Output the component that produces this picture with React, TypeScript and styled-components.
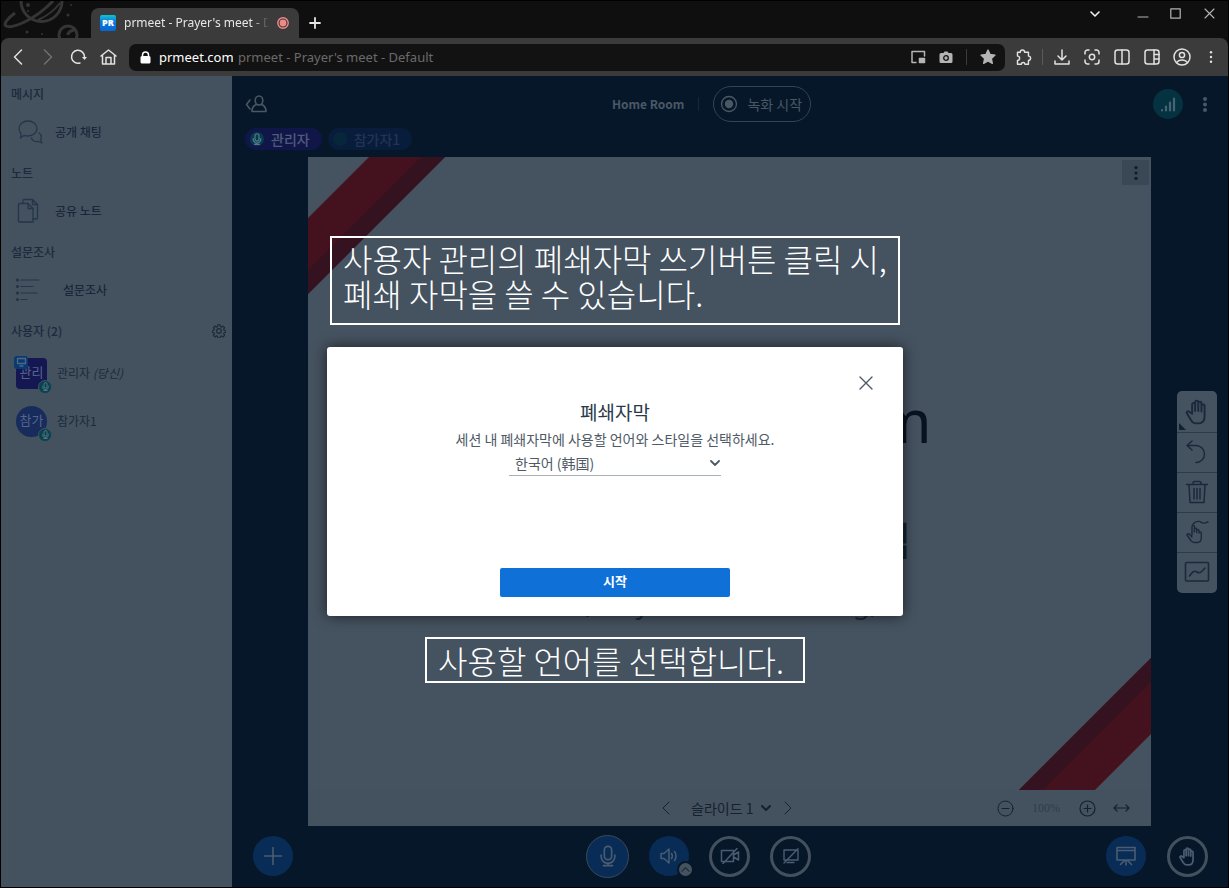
import React from "react";
import styled, { createGlobalStyle, css } from "styled-components";

const c = {
  navy: "#061729",
  panel: "#44515e",
  slide: "#45525f",
  ink: "#1b2a3c",
  faint: "#4a5866",
  blue: "#082c56",
  chrome: "#3b3b3b",
};

const GlobalStyle = createGlobalStyle`
  * { box-sizing: border-box; }
  body { margin: 0; background: #000; font-family: "Noto Sans CJK KR", "Noto Sans", sans-serif; }
  button, input, select { font: inherit; color: inherit; }
  h1, h2, p { margin: 0; font-weight: 400; }
  svg { display: block; flex: none; }
`;

/* ---------- browser frame ---------- */

const Window = styled.div`
  display: flex;
  flex-direction: column;
  min-height: 100vh;
  border: 1px solid #000;
  background: #0f0f0f;
`;

const TitleBar = styled.header`
  display: flex;
  align-items: flex-end;
  height: 37px;
  color: #e6e6e6;
`;

const Tab = styled.div`
  display: flex;
  align-items: center;
  gap: 8px;
  width: 208px;
  height: 30px;
  padding: 0 10px 0 9px;
  border-radius: 8px 8px 0 0;
  background: ${c.chrome};
`;

const TabTitle = styled.span`
  flex: 1;
  overflow: hidden;
  white-space: nowrap;
  font: 12px/16px "Noto Sans", sans-serif;
  mask-image: linear-gradient(90deg, #000 88%, transparent);
`;

const Favicon = styled.span`
  width: 16px;
  height: 16px;
  border-radius: 2px;
  background: linear-gradient(#12c4cf, #0b7de0 40%, #0766cf);
  color: #fff;
  font: 800 9px/16px "Open Sans", sans-serif;
  text-align: center;
`;

const Plain = styled.button<{ $w?: number; $h?: number }>`
  display: flex;
  align-items: center;
  justify-content: center;
  flex: none;
  width: ${(p) => p.$w ?? 30}px;
  height: ${(p) => p.$h ?? 30}px;
  padding: 0;
  border: 0;
  background: none;
  color: inherit;
`;

const WindowButtons = styled.div`
  display: flex;
  align-self: flex-start;
  margin-left: auto;
  padding: 0 3px 0 0;
  color: #b4b4b4;
`;

const Toolbar = styled.nav`
  display: flex;
  align-items: center;
  height: 38px;
  padding: 0 3px 0 2px;
  border-radius: 8px 8px 0 0;
  background: ${c.chrome};
  color: #e2e2e2;
`;

const AddressBar = styled.div`
  display: flex;
  align-items: center;
  flex: 1;
  height: 27px;
  margin: 0 3px 0 6px;
  padding: 0 2px 0 11px;
  border-radius: 7px;
  background: #121212;
  font: 13px/18px "Noto Sans", sans-serif;
  color: #b4b4b4;
`;

const Url = styled.input`
  width: 82px;
  padding: 0 0 0 8px;
  margin-right: 5px;
  border: 0;
  background: none;
  color: #fff;
`;

const PageName = styled.span`
  flex: 1;
  white-space: nowrap;
  color: #6a6a6a;
`;

const Divider = styled.i<{ $tone: string; $h: number; $gap: number }>`
  width: 1px;
  height: ${(p) => p.$h}px;
  margin: 0 ${(p) => p.$gap}px;
  background: ${(p) => p.$tone};
`;

/* ---------- meeting ---------- */

const Meeting = styled.div`
  position: relative;
  display: flex;
  flex: 1;
  background: ${c.navy};
`;

const Sidebar = styled.aside`
  width: 231px;
  padding-top: 10px;
  background: ${c.panel};
  color: ${c.ink};
  font-size: 12px;
  line-height: 16px;
`;

const Section = styled.section`
  margin-bottom: 13px;
`;

const SectionTitle = styled.h2`
  display: flex;
  align-items: center;
  justify-content: space-between;
  height: 16px;
  padding: 0 6px 0 10px;
  font-size: 12px;
  font-weight: 500;
  line-height: 16px;
`;

const SideItem = styled.button<{ $indent?: boolean }>`
  display: flex;
  align-items: center;
  gap: ${(p) => (p.$indent ? 22 : 12)}px;
  width: 100%;
  height: 40px;
  margin-top: 10px;
  padding: 0 14px;
  border: 0;
  background: none;
  color: #101d33;
  text-align: left;
  svg { color: #25364a; }
`;

const UserList = styled.ul`
  margin: 10px 0 0;
  padding: 0 15px;
  list-style: none;
`;

const User = styled.li`
  display: flex;
  align-items: center;
  gap: 10px;
  height: 48px;
`;

const Avatar = styled.span<{ $round?: boolean }>`
  position: relative;
  width: 31px;
  height: 31px;
  border-radius: ${(p) => (p.$round ? "50%" : "4px")};
  background: ${(p) => (p.$round ? "#172b5c" : "#151753")};
  color: #54648a;
  font-size: 13px;
  line-height: 28px;
  text-align: center;
`;

const badge = css`
  position: absolute;
  display: grid;
  place-items: center;
`;

const MicBadge = styled.span`
  ${badge}
  right: -5px;
  bottom: -5px;
  width: 14px;
  height: 14px;
  border: 1px solid ${c.panel};
  border-radius: 50%;
  background: #074250;
  color: #5b7580;
`;

const PresenterBadge = styled.span`
  ${badge}
  left: -2px;
  top: -2px;
  width: 14px;
  height: 13px;
  border-radius: 3px;
  background: #0b3a70;
  color: #4e6787;
`;

const Content = styled.main`
  display: flex;
  flex: 1;
  flex-direction: column;
  min-width: 0;
  color: ${c.faint};
`;

const NavBar = styled.div`
  display: flex;
  align-items: center;
  height: 52px;
  padding: 4px 8px 0 9px;
`;

const Side = styled.div<{ $end?: boolean }>`
  display: flex;
  align-items: center;
  flex: 1;
  justify-content: ${(p) => (p.$end ? "flex-end" : "flex-start")};
`;

const RoomInfo = styled.div`
  display: flex;
  align-items: center;
  padding-right: 38px;
`;

const RoomName = styled.h1`
  font-size: 12px;
  font-weight: 700;
  line-height: 18px;
`;

const RecordButton = styled.button`
  display: flex;
  align-items: center;
  gap: 9px;
  height: 36px;
  padding: 0 8px 0 6px;
  border: 1px solid #344454;
  border-radius: 18px;
  background: none;
  font-size: 14px;
  line-height: 20px;
`;

const Signal = styled.button`
  display: grid;
  place-items: center;
  width: 30px;
  height: 30px;
  margin-right: 7px;
  padding: 0;
  border: 0;
  border-radius: 50%;
  background: #053241;
  color: #466472;
`;

const Speakers = styled.div`
  display: flex;
  gap: 6px;
  height: 29px;
  padding-left: 13px;
`;

const Speaker = styled.button<{ $quiet?: boolean }>`
  display: flex;
  align-items: center;
  gap: 7px;
  height: 22px;
  padding: 0 12px 0 5px;
  border: 0;
  border-radius: 11px;
  background: ${(p) => (p.$quiet ? "#081c3c" : "#101748")};
  color: ${(p) => (p.$quiet ? "#223452" : "#505b7c")};
  font-size: 14px;
  font-weight: 500;
  line-height: 18px;
`;

const SpeakerDot = styled.span<{ $quiet?: boolean }>`
  display: grid;
  place-items: center;
  width: 14px;
  height: 14px;
  border-radius: 50%;
  background: ${(p) => (p.$quiet ? "#06273a" : "#063a4c")};
  color: #527888;
`;

const Stage = styled.div`
  display: flex;
  flex: 1;
  align-items: center;
`;

const Presentation = styled.section`
  display: flex;
  flex: 1;
  flex-direction: column;
  align-self: stretch;
  margin: 0 26px 0 76px;
  background: ${c.panel};
`;

const Slide = styled.div`
  position: relative;
  display: flex;
  flex: 1;
  flex-direction: column;
  align-items: center;
  padding-top: 223px;
  background: ${c.slide};
  color: #07131f;
`;

const Ribbon = styled.svg<{ $end?: boolean }>`
  position: absolute;
  ${(p) => (p.$end ? "right: 0; bottom: 0; transform: rotate(180deg);" : "left: 0; top: 0;")}
`;

const SlideMenu = styled.button`
  position: absolute;
  top: 3px;
  right: 2px;
  display: grid;
  place-items: center;
  width: 27px;
  height: 25px;
  padding: 0;
  border: 0;
  background: #3a4755;
  color: #101c2b;
`;

const SlideHeading = styled.p`
  width: 404px;
  font: 60px/80px "Noto Sans", sans-serif;
  text-align: right;
`;

const SlideSubheading = styled.p`
  width: 404px;
  padding: 50px 20px 0 0;
  font-size: 40px;
  line-height: 58px;
  text-align: right;
  color: #14212f;
`;

const SlideCaption = styled.p`
  display: flex;
  width: 296px;
  margin-top: 14px;
  font: 28px/40px "Noto Sans", sans-serif;
  color: #1d2a38;
  span { width: 54px; }
  span:last-child { width: auto; margin-left: auto; }
`;

const SlideControls = styled.div`
  display: flex;
  align-items: center;
  height: 36px;
  padding-right: 5px;
  color: #14212f;
`;

const SlidePicker = styled.label`
  display: flex;
  align-items: center;
  gap: 2px;
  margin: 0 2px 0 10px;
`;

const bareSelect = css`
  appearance: none;
  padding: 0;
  border: 0;
  background: none;
  outline: 0;
`;

const SlideSelect = styled.select`
  ${bareSelect}
  width: 68px;
  font-size: 14px;
  line-height: 18px;
`;

const ZoomLevel = styled.span`
  width: 64px;
  color: #303e4b;
  font: 12px/16px "Liberation Serif", serif;
  text-align: center;
`;

const Tools = styled.div`
  display: flex;
  flex-direction: column;
  width: 40px;
  margin-right: 11px;
  padding: 1px 0;
  border-radius: 5px;
  background: ${c.slide};
  color: #1a293c;
  overflow: hidden;
`;

const Tool = styled.button`
  position: relative;
  display: grid;
  place-items: center;
  height: 40px;
  padding: 0;
  border: 0;
  background: none;
  color: inherit;
  & + & { border-top: 1px solid #2d3b49; }
`;

const Corner = styled.i`
  position: absolute;
  left: 2px;
  bottom: 2px;
  border-top: 7px solid transparent;
  border-left: 7px solid #14212f;
`;

const ActionBar = styled.footer`
  display: flex;
  align-items: center;
  height: 61px;
  padding: 0 20px 1px 21px;
`;

const MediaButtons = styled.div`
  display: flex;
  align-items: center;
  gap: 20px;
  padding-right: 64px;
`;

const Round = styled.button<{ $kind: "solid" | "ring" | "talking" }>`
  position: relative;
  display: grid;
  place-items: center;
  width: ${(p) => (p.$kind === "talking" ? 43 : p.$kind === "ring" ? 41 : 40)}px;
  aspect-ratio: 1;
  padding: 0;
  border: ${(p) =>
    p.$kind === "solid" ? "0" : p.$kind === "ring" ? "3px solid #43505d" : "1px solid #3b4a5a"};
  border-radius: 50%;
  background: ${(p) => (p.$kind === "ring" ? "none" : c.blue)};
  color: #4b5c70;
`;

const MoreBadge = styled.span`
  ${badge}
  right: -5px;
  bottom: -2px;
  width: 17px;
  height: 17px;
  border: 2px solid ${c.navy};
  border-radius: 50%;
  background: #46535f;
  color: #17273a;
`;

/* ---------- dialog and captions over the meeting ---------- */

const Overlay = styled.div`
  position: absolute;
  inset: 0;
  display: flex;
  flex-direction: column;
  align-items: center;
  padding: 160px 0 0 1px;
`;

const Note = styled.p<{ $wide?: boolean }>`
  width: ${(p) => (p.$wide ? 570 : 380)}px;
  height: ${(p) => (p.$wide ? 89 : 46)}px;
  padding: ${(p) => (p.$wide ? 3 : 4)}px 0 0 11px;
  border: 2px solid #fff;
  color: #fff;
  font-size: 32px;
  font-weight: 300;
  line-height: 35px;
  white-space: nowrap;
`;

const Dialog = styled.div`
  display: flex;
  flex-direction: column;
  align-items: center;
  width: 576px;
  height: 269px;
  margin: 22px 0 21px;
  padding: 21px 20px 19px;
  border-radius: 3px;
  background: #fff;
  box-shadow: 0 0 14px rgba(0, 0, 0, 0.6);
  color: #4e5a66;
  font-size: 14px;
  line-height: 20px;
`;

const CloseButton = styled(Plain)`
  align-self: flex-end;
  margin-right: 2px;
`;

const DialogTitle = styled.h2`
  margin-top: 1px;
  color: #2b3a4a;
  font-size: 19px;
  line-height: 26px;
`;

const DialogText = styled.p`
  margin-top: 4px;
`;

const LanguageField = styled.label`
  display: flex;
  align-items: center;
  width: 212px;
  height: 24px;
  margin-top: 3px;
  padding: 0 1px 1px 6px;
  border-bottom: 1px solid #a9b2ba;
`;

const LanguageSelect = styled.select`
  ${bareSelect}
  flex: 1;
`;

const StartButton = styled.button`
  width: 230px;
  height: 29px;
  margin-top: auto;
  padding: 0 0 4px;
  border: 0;
  border-radius: 2px;
  background: #0f70d7;
  color: #fff;
  font-size: 13px;
  font-weight: 700;
  line-height: 20px;
`;

/* ---------- icons ---------- */

type IconProps = {
  w?: number;
  h?: number;
  box?: string;
  sw?: number;
  fill?: string;
  children: React.ReactNode;
};

const Icon = ({ w = 18, h = w, box = "0 0 24 24", sw = 1.5, fill = "none", children }: IconProps) => (
  <svg
    width={w}
    height={h}
    viewBox={box}
    fill={fill}
    stroke="currentColor"
    strokeWidth={sw}
    strokeLinecap="round"
    strokeLinejoin="round"
    aria-hidden="true"
  >
    {children}
  </svg>
);

const Chevron = ({ d, w = 10, h = w, sw = 1.5 }: { d: "u" | "d"; w?: number; h?: number; sw?: number }) => {
  const paths = { u: "M1 7l4-4 4 4", d: "M1 3l4 4 4-4" };
  return (
    <Icon w={w} h={h} box="0 0 10 10" sw={sw}>
      <path d={paths[d]} />
    </Icon>
  );
};

const Dots = ({ h = 16, r = 2 }: { h?: number; r?: number }) => (
  <svg width="6" height={h} viewBox={`0 0 6 ${h}`} fill="currentColor" aria-hidden="true">
    <circle cx="3" cy={r} r={r} />
    <circle cx="3" cy={h / 2} r={r} />
    <circle cx="3" cy={h - r} r={r} />
  </svg>
);

const Mic = ({ s = 20, sw = 2 }: { s?: number; sw?: number }) => (
  <Icon w={s} sw={sw}>
    <rect x="8" y="1.5" width="8" height="14.5" rx="4" />
    <path d="M4.500 11v1.500a7.500 7.500 0 0 0 15 0V11M12 20v2.500M7 22.500h10" />
  </Icon>
);

const Hand = ({ s = 26, sw = 1.8 }: { s?: number; sw?: number }) => (
  <Icon w={s} sw={sw}>
    <path d="M7.500 13.500V5a1.400 1.400 0 0 1 2.800 0v6V3a1.400 1.400 0 0 1 2.900 0v8V4a1.400 1.400 0 0 1 2.900 0v7.500V6.500a1.400 1.400 0 0 1 2.900 0v9.500c0 4-2 6.500-5.500 6.500H11c-2 0-3.500-1-4.500-3L2.500 13c-.5-1.200 1.200-2.200 2.200-1.200z" />
  </Icon>
);

const Planet = () => (
  <svg width="90" height="37" viewBox="0 0 90 37" fill="none" stroke="#353535" strokeWidth="3" aria-hidden="true">
    <path d="M20 0a20 20 0 0 0 41 0" />
    <path d="M14 12C7 17 2 23 5 25c6 3 29-6 47-25" />
    <path d="M59 2c-6 8-13 13-22 17" strokeWidth="2" />
    <circle cx="67" cy="34" r="9" />
    <path d="M67 34c0-4 3-4 6-5" />
    <g fill="#353535" stroke="none">
      <circle cx="27" cy="4" r="2" />
      <circle cx="27" cy="10" r="1" />
      <circle cx="26" cy="31" r="1.500" />
      <circle cx="41" cy="33" r="1" />
      <circle cx="67" cy="14" r="1.500" />
      <circle cx="70" cy="4" r="1" />
    </g>
  </svg>
);

const RibbonBands = ({ size, end }: { size: number; end?: boolean }) => (
  <Ribbon $end={end} width={size} height={size} viewBox={`0 0 ${size} ${size}`} aria-hidden="true">
    <path d={`M${size - 76} 0H${size}L0 ${size}V${size - 76}z`} fill="#44121e" />
    <path d={`M${size - 24} 0H${size}L0 ${size}V${size - 24}z`} fill="#341220" />
  </Ribbon>
);

export default function App() {
  return (
    <Window>
      <GlobalStyle />
      <TitleBar>
        <Planet />
        <Tab>
          <Favicon>PR</Favicon>
          <TabTitle>prmeet - Prayer's meet - Default</TabTitle>
          <svg width="12" height="12" viewBox="0 0 12 12" aria-hidden="true">
            <circle cx="6" cy="6" r="5.200" fill="none" stroke="#f08a87" strokeWidth="1.400" />
            <circle cx="6" cy="6" r="3.400" fill="#f08a87" />
          </svg>
        </Tab>
        <Plain $w={32} aria-label="New tab">
          <Icon w={12} box="0 0 12 12" sw={1.8}><path d="M6 1v10M1 6h10" /></Icon>
        </Plain>
        <WindowButtons>
          <Plain $w={68} $h={25} aria-label="Tab search">
            <Icon w={10} box="0 0 10 10" sw={1.600}><path d="M1 3l4 4 4-4" stroke="#f0f0f0" /></Icon>
          </Plain>
          <Plain $w={28} $h={30} aria-label="Minimize">
            <Icon w={12} box="0 0 12 12" sw={1.2}><path d="M1 7h10" /></Icon>
          </Plain>
          <Plain $w={36} $h={24} aria-label="Maximize">
            <Icon w={11} box="0 0 11 11" sw={1.200}><path d="M.8.800h9.400v9.400H.800z" /></Icon>
          </Plain>
          <Plain $w={32} $h={24} aria-label="Close window">
            <Icon w={11} box="0 0 11 11" sw={1.100}><path d="M1 1l9 9M10 1l-9 9" /></Icon>
          </Plain>
        </WindowButtons>
      </TitleBar>

      <Toolbar>
        <Plain aria-label="Back">
          <Icon w={10} h={16} box="0 0 10 16"><path d="M8.500 1 1.500 8l7 7" /></Icon>
        </Plain>
        <Plain aria-label="Forward">
          <Icon w={10} h={16} box="0 0 10 16"><path d="M1.500 1l7 7-7 7" stroke="#707070" /></Icon>
        </Plain>
        <Plain aria-label="Reload">
          <Icon w={17} h={16} box="0 0 17 16">
            <path d="M10 14a6.500 6.500 0 1 1 4.500-6" />
            <path d="M12 8h5l-2.500 3z" fill="currentColor" stroke="none" />
          </Icon>
        </Plain>
        <Plain aria-label="Home">
          <Icon w={17} h={16} box="0 0 17 16">
            <path d="M1 7l7.500-6L16 7M2.500 6v9h12V6M6 15V8.500h5V15" />
          </Icon>
        </Plain>
        <AddressBar>
          <svg width="11" height="13" viewBox="0 0 11 13" fill="#fff" aria-hidden="true">
            <rect x="0.500" y="5" width="10" height="7.500" rx="1.500" />
            <path d="M2.500 6V4a3 3 0 0 1 6 0v2" fill="none" stroke="#fff" strokeWidth="1.500" />
          </svg>
          <Url aria-label="Address" defaultValue="prmeet.com" />
          <PageName>prmeet - Prayer's meet - Default</PageName>
          <Plain $w={28} $h={26} aria-label="Picture in picture">
            <Icon w={15} h={14} box="0 0 15 14">
              <path d="M5 12.500H1V1.500h12.500V6" />
              <path d="M8.500 8.500h5v4h-5z" fill="currentColor" />
            </Icon>
          </Plain>
          <Plain $w={28} $h={26} aria-label="Capture">
            <svg width="14" height="13" viewBox="0 0 14 13" fill="currentColor">
              <path d="M4.500 2 5.500.500h3L9.500 2H12a1.500 1.500 0 0 1 1.500 1.500v7A1.500 1.500 0 0 1 12 12H2a1.500 1.500 0 0 1-1.500-1.500v-7A1.500 1.500 0 0 1 2 2z" />
              <circle cx="7" cy="7" r="2.300" fill="none" stroke="#121212" strokeWidth="1.300" />
            </svg>
          </Plain>
          <Divider $tone="#3c3c3c" $h={16} $gap={6} />
          <Plain $w={30} $h={26} aria-label="Bookmark">
            <svg width="16" height="16" viewBox="0 0 24 24" fill="currentColor" stroke="currentColor" strokeWidth="2" strokeLinejoin="round">
              <path d="m12 1.500 3.200 6.800 7.300.900-5.400 5.100 1.400 7.300L12 18l-6.500 3.600 1.400-7.300L1.500 9.200l7.300-.900z" />
            </svg>
          </Plain>
        </AddressBar>
        <Plain aria-label="Extensions">
          <Icon w={17}>
            <path d="M7.500 4.500a3 3 0 0 1 6 0H19v5.500a3 3 0 0 1 0 6v5.500h-5a2.500 2.500 0 0 0-5 0H3.500v-5.500a3 3 0 0 0 0-6V4.500z" strokeWidth="2" />
          </Icon>
        </Plain>
        <Divider $tone="#5a5a5a" $h={16} $gap={4} />
        <Plain aria-label="Downloads">
          <Icon w={16} h={16} box="0 0 16 16"><path d="M8 1v9.500M4 7l4 4 4-4M1 12v3h14v-3" /></Icon>
        </Plain>
        <Plain aria-label="Lens">
          <Icon w={16} h={16} box="0 0 16 16">
            <path d="M1 5V3.500A2.500 2.500 0 0 1 3.500 1H5M11 1h1.500A2.500 2.500 0 0 1 15 3.500V5M15 11v1.500a2.500 2.500 0 0 1-2.500 2.500H11M5 15H3.500A2.500 2.500 0 0 1 1 12.500V11" />
            <circle cx="8" cy="8" r="2.700" />
          </Icon>
        </Plain>
        <Plain aria-label="Split view">
          <Icon w={16} h={16} box="0 0 16 16"><rect x="1" y="1" width="14" height="14" rx="2.500" /><path d="M8 1v14" /></Icon>
        </Plain>
        <Plain aria-label="Side panel">
          <Icon w={16} h={16} box="0 0 16 16"><rect x="1" y="1" width="14" height="14" rx="2.500" /><path d="M10 1v14M10 5.500h5M10 10h5" /></Icon>
        </Plain>
        <Plain aria-label="Profile">
          <Icon w={18} h={18} box="0 0 18 18">
            <circle cx="9" cy="9" r="8" /><circle cx="9" cy="7" r="2.600" /><path d="M3.500 14.500c2.500-3.500 8.500-3.500 11 0" />
          </Icon>
        </Plain>
        <Plain $w={28} aria-label="Browser menu"><Dots h={12} r={1.2} /></Plain>
      </Toolbar>

      <Meeting>
        <Sidebar>
          <Section>
            <SectionTitle>메시지</SectionTitle>
            <SideItem>
              <Icon w={28} h={26} box="0 0 28 26" sw={1.3}>
                <path d="M13 2c5 0 9 3.200 9 7.500S18 17 13 17c-1.500 0-3-.300-4-.700L5.500 19l.500-4.500C4.700 13 4 11.300 4 9.500 4 5.200 8 2 13 2z" />
                <path d="M24 14c2 1.500 3 4 1.500 6.500L27 24l-3.500-1.500c-3 .800-6.500-1-7-3.500" />
              </Icon>
              공개 채팅
            </SideItem>
          </Section>
          <Section>
            <SectionTitle>노트</SectionTitle>
            <SideItem>
              <Icon w={28} h={26} box="0 0 28 26" sw={1.3}>
                <path d="M4.500 5.500h8.500l5 5V24H4.500a1 1 0 0 1-1-1V6.500a1 1 0 0 1 1-1z" />
                <path d="M13 5.500v5h5M8 5.500V2.500a1 1 0 0 1 1-1h8.500l5 5V20a1 1 0 0 1-1 1H18M17.500 1.500v5h5" />
              </Icon>
              공유 노트
            </SideItem>
          </Section>
          <Section>
            <SectionTitle>설문조사</SectionTitle>
            <SideItem $indent>
              <Icon w={26} h={24} box="0 0 26 24" sw={1.2}>
                <path d="M6 2h18M6 8.500h12M6 15h16M6 21.500h6" />
                <g fill="currentColor"><circle cx="2.500" cy="2" r="1" /><circle cx="2.500" cy="8.500" r="1" /><circle cx="2.500" cy="15" r="1" /><circle cx="2.500" cy="21.500" r="1" /></g>
              </Icon>
              설문조사
            </SideItem>
          </Section>
          <Section>
            <SectionTitle>
              사용자 (2)
              <Plain $w={14} $h={14} aria-label="사용자 관리">
                <Icon w={14} sw={2}>
                  <circle cx="12" cy="12" r="4" />
                  <path d="M10 1.500h4l.6 3 2 .9 2.600-1.800 2.400 2.600-1.600 2.500.8 2 3 .6v3l-3 .7-.8 2 1.600 2.500-2.400 2.600-2.600-1.700-2 .8-.6 3h-4l-.6-3-2-.8-2.600 1.700-2.400-2.600L4 17l-.800-2-3-.700v-3l3-.600.800-2-1.600-2.500 2.400-2.600 2.600 1.800 2-.9z" />
                </Icon>
              </Plain>
            </SectionTitle>
            <UserList>
              <User>
                <Avatar>
                  관리
                  <PresenterBadge>
                    <Icon w={11} h={10} box="0 0 11 10" sw={1.3}><path d="M1.500 1.500h8v5h-8zM4 9h3" /></Icon>
                  </PresenterBadge>
                  <MicBadge><Mic s={9} sw={2.5} /></MicBadge>
                </Avatar>
                <span>관리자 <i>(당신)</i></span>
              </User>
              <User>
                <Avatar $round>
                  참가
                  <MicBadge><Mic s={9} sw={2.5} /></MicBadge>
                </Avatar>
                <span>참가자1</span>
              </User>
            </UserList>
          </Section>
        </Sidebar>

        <Content>
          <NavBar>
            <Side>
              <Plain aria-label="사용자 목록">
                <Icon w={22} h={18} box="0 0 22 18" sw={1.600}>
                  <path d="M5 5 1.500 9.500 5 14" />
                  <ellipse cx="14" cy="5.500" rx="3.800" ry="4.500" />
                  <path d="M11.500 9.500C8.500 10.500 7 12 7 16.500h14c0-4.500-1.500-6-4.500-7" />
                </Icon>
              </Plain>
            </Side>
            <RoomInfo>
              <RoomName>Home Room</RoomName>
              <Divider $tone="#15273a" $h={14} $gap={14} />
              <RecordButton>
                <Icon w={18} box="0 0 18 18" sw={1.3}>
                  <circle cx="9" cy="9" r="7.500" />
                  <circle cx="9" cy="9" r="3.500" fill="currentColor" />
                </Icon>
                녹화 시작
              </RecordButton>
            </RoomInfo>
            <Side $end>
              <Signal aria-label="연결 상태">
                <Icon w={16} h={15} box="0 0 16 15" sw={2.200}><path d="M2 13v.500M6 9.500v4M10 5.500v8M14 1.500v12" /></Icon>
              </Signal>
              <Plain aria-label="옵션"><Dots h={15} r={2} /></Plain>
            </Side>
          </NavBar>
          <Speakers>
            <Speaker><SpeakerDot><Mic s={12} sw={2.5} /></SpeakerDot>관리자</Speaker>
            <Speaker $quiet><SpeakerDot $quiet />참가자1</Speaker>
          </Speakers>

          <Stage>
            <Presentation>
              <Slide>
                <RibbonBands size={137} />
                <RibbonBands size={132} end />
                <SlideMenu aria-label="슬라이드 옵션"><Dots h={14} r={1.600} /></SlideMenu>
                <SlideHeading>m</SlideHeading>
                <SlideSubheading>님</SlideSubheading>
                <SlideCaption><span>(</span><span>y</span><span>g,</span></SlideCaption>
              </Slide>
              <SlideControls>
                <Side />
                <Plain $w={30} aria-label="이전 슬라이드"><Icon w={8} h={14} box="0 0 8 14" sw={1}><path d="M7 1 1 7l6 6" /></Icon></Plain>
                <SlidePicker>
                  <SlideSelect aria-label="슬라이드 선택"><option>슬라이드 1</option></SlideSelect>
                  <Chevron d="d" sw={2} />
                </SlidePicker>
                <Plain $w={30} aria-label="다음 슬라이드"><Icon w={8} h={14} box="0 0 8 14" sw={1}><path d="M1 1l6 6-6 6" /></Icon></Plain>
                <Side $end>
                  <Plain $w={18} aria-label="축소"><Icon w={17} box="0 0 17 17" sw={1}><circle cx="8.500" cy="8.500" r="7.500" /><path d="M5 8.500h7" /></Icon></Plain>
                  <ZoomLevel>100%</ZoomLevel>
                  <Plain $w={18} aria-label="확대"><Icon w={17} box="0 0 17 17" sw={1.200}><circle cx="8.500" cy="8.500" r="7.500" /><path d="M5 8.500h7M8.500 5v7" /></Icon></Plain>
                  <Plain $w={50} aria-label="너비에 맞추기"><Icon w={17} h={8} box="0 0 17 8" sw={1.200}><path d="M1 4h15M4 1 1 4l3 3M13 1l3 3-3 3" /></Icon></Plain>
                </Side>
              </SlideControls>
            </Presentation>
            <Tools>
              <Tool aria-label="이동"><Hand /><Corner /></Tool>
              <Tool aria-label="실행 취소"><Icon w={24} sw={1.500}><path d="M7 1 2 5.500l5 4.500M2 5.500h9a8.500 8.500 0 0 1 0 17" /></Icon></Tool>
              <Tool aria-label="모두 지우기"><Icon w={24} sw={1.500}><path d="M1.500 4.500h21M8 4.500V3a1.500 1.500 0 0 1 1.500-1.500h5A1.500 1.500 0 0 1 16 3v1.500M4 4.500 5 22.500h14l1-18M9 8.500v10.500M12 8.500v10.500M15 8.500v10.500" /></Icon></Tool>
              <Tool aria-label="다중 사용자 화이트보드"><Icon w={24} sw={1.400}><path d="M7 15V6.500a1.200 1.200 0 0 1 2.400 0V12V9a1.200 1.200 0 0 1 2.300 0v3.500V10.500a1.200 1.200 0 0 1 2.300 0V13c0-1.500 2.300-1.500 2.300 0v4.500c0 3.500-1 5-4 5H9c-1.500 0-2.500-.800-3.500-2.500L2 15c0-1.800 2-1.500 2.800-.500L7 17M8 4c3-3.500 7-3 8.500-1.500s3 .500 6.500-.500" /></Icon></Tool>
              <Tool aria-label="주석"><Icon w={26} h={22} box="0 0 26 22" sw={1.600}><rect x="1.500" y="1.500" width="23" height="18.500" rx="1" /><path d="M5.500 15c3-4 4.500-6 7.500-4s5-.500 8-4" /></Icon></Tool>
            </Tools>
          </Stage>

          <ActionBar>
            <Side><Round $kind="solid" aria-label="작업"><Icon w={20} box="0 0 20 20" sw={1.600}><path d="M10 1.500v17M1.500 10h17" /></Icon></Round></Side>
            <MediaButtons>
              <Round $kind="talking" aria-label="음소거"><Mic s={22} sw={1.800} /></Round>
              <Round $kind="solid" aria-label="오디오">
                <Icon w={18} h={16} box="0 0 18 16" sw={1.500}><path d="M1 5.500h3L9 1v14l-5-4.500H1zM11.500 5.500c1 1.500 1 3.500 0 5M14.500 3.500c2 2.500 2 6.500 0 9" /></Icon>
                <MoreBadge><Chevron d="u" sw={1.200} w={9} /></MoreBadge>
              </Round>
              <Round $kind="ring" aria-label="웹캠 공유"><Icon w={20} h={16} box="0 0 20 16" sw={1.500}><path d="M1.500 2.500h12v11h-12zM13.500 7l5-3v8l-5-3M3 15.500 17 .500" /></Icon></Round>
              <Round $kind="ring" aria-label="화면 공유"><Icon w={18} h={16} box="0 0 18 16" sw={1.400}><path d="M2 2h14v10H2zM5 14.500h7M2 15 16 .800" /></Icon></Round>
            </MediaButtons>
            <Side $end>
              <Round $kind="solid" aria-label="프레젠테이션"><Icon w={22} h={20} box="0 0 22 20" sw={1.600}><path d="M2 1.500h18v12.500H2zM2 4.500h18M11 14v5M10 14l-4.500 4.500M12 14l4.500 4.500" /></Icon></Round>
              <Divider $tone="transparent" $h={1} $gap={10} />
              <Round $kind="ring" aria-label="손들기"><Hand s={19} sw={2.200} /></Round>
            </Side>
          </ActionBar>
        </Content>

        <Overlay>
          <Note $wide>
            사용자 관리의 폐쇄자막 쓰기버튼 클릭 시,
            <br />
            폐쇄 자막을 쓸 수 있습니다.
          </Note>
          <Dialog role="dialog" aria-modal="true" aria-labelledby="caption-title">
            <CloseButton aria-label="닫기">
              <Icon w={14} box="0 0 14 14" sw={1.400}><path d="M1 1l12 12M13 1 1 13" /></Icon>
            </CloseButton>
            <DialogTitle id="caption-title">폐쇄자막</DialogTitle>
            <DialogText>세션 내 폐쇄자막에 사용할 언어와 스타일을 선택하세요.</DialogText>
            <LanguageField>
              <LanguageSelect aria-label="언어"><option>한국어 (韩国)</option></LanguageSelect>
              <Chevron d="d" sw={1.800} />
            </LanguageField>
            <StartButton>시작</StartButton>
          </Dialog>
          <Note>사용할 언어를 선택합니다.</Note>
        </Overlay>
      </Meeting>
    </Window>
  );
}
